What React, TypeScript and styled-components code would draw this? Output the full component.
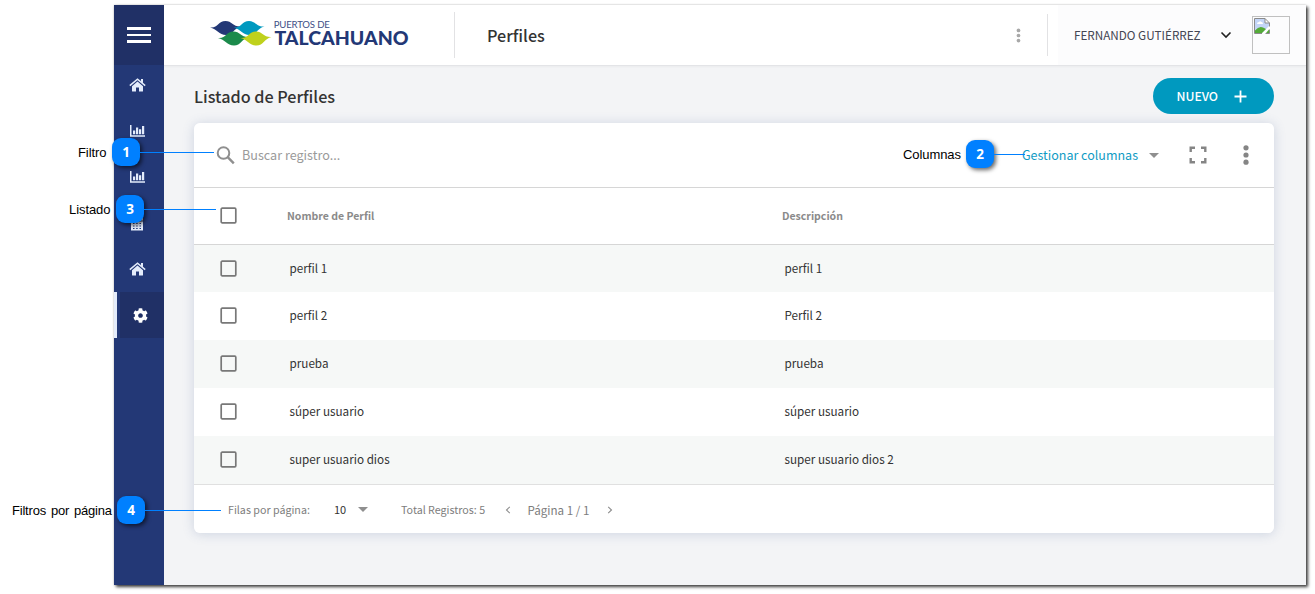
import React from "react";
import styled, { createGlobalStyle, css } from "styled-components";

const GlobalStyle = createGlobalStyle`
  * { box-sizing: border-box; }
  html, body { margin: 0; padding: 0; background: #fff; overflow: hidden; }
  body { font-family: "Noto Sans CJK JP", "Noto Sans", sans-serif; }
`;

const Stage = styled.div`
  position: relative;
  width: 1315px;
  height: 594px;
  padding: 5px 9px 9px 114px;
  background: #fff;
`;

const Shell = styled.div`
  display: flex;
  width: 1192px;
  height: 580px;
  background: #f3f4f6;
  box-shadow: 2px 2px 3px 0 rgba(0, 0, 0, 0.75), 0 0 2px rgba(0, 0, 0, 0.2);
`;

const Sidebar = styled.aside`
  flex: none;
  width: 50px;
  background: #233876;
`;

const MenuButton = styled.div`
  display: flex;
  flex-direction: column;
  align-items: center;
  justify-content: center;
  gap: 4px;
  height: 60px;
  background: #203066;
`;

const MenuBar = styled.span`
  width: 24px;
  height: 2.6px;
  background: #fff;
`;

const Nav = styled.nav`
  margin-top: -3px;
`;

const NavItem = styled.div<{ $active?: boolean }>`
  display: flex;
  align-items: center;
  justify-content: center;
  height: 46px;
  padding-right: 4px;
  color: #e4ecfb;
  ${(p) =>
    p.$active &&
    css`
      padding: 0 0 0 2px;
      color: #fff;
      background: linear-gradient(to right, #e4ecfb 3px, #233876 3px, #233876 6px, #203066 6px);
    `}
`;

const Main = styled.main`
  flex: 1;
  display: flex;
  flex-direction: column;
  min-width: 0;
`;

const Header = styled.header`
  display: flex;
  align-items: center;
  height: 61px;
  background: #fff;
  border-bottom: 1px solid #e3e4e7;
  box-shadow: 0 1px 2px rgba(0, 0, 0, 0.04);
`;

const LogoBox = styled.div`
  display: flex;
  align-items: center;
  width: 291px;
  height: 46px;
  padding-left: 45px;
  border-right: 1px solid #e2e2e4;
`;

const HeaderTitle = styled.h1`
  flex: 1;
  margin: 0;
  padding-left: 32px;
  font-size: 16.2px;
  line-height: 24px;
  font-weight: 500;
  color: #333;
`;

const HeaderMore = styled.div`
  display: flex;
  align-items: center;
  justify-content: flex-end;
  width: 50px;
  height: 42px;
  padding-right: 20px;
  border-right: 1px solid #e2e2e4;
`;

const UserBox = styled.div`
  display: flex;
  align-items: center;
  align-self: stretch;
  width: 248px;
  margin-left: 10px;
  padding: 0 16px;
  background: #fcfcfd;
`;

const UserName = styled.span`
  flex: none;
  width: 146px;
  font-size: 11.7px;
  line-height: 20px;
  color: #444653;
  white-space: nowrap;
`;

const Avatar = styled.div`
  width: 38px;
  height: 38px;
  margin-left: auto;
  padding: 1px;
  border: 1px solid #c0c0c0;
  line-height: 0;
`;

const Content = styled.section`
  flex: 1;
  padding: 12px 32px 0 30px;
`;

const TitleRow = styled.div`
  display: flex;
  align-items: center;
  justify-content: space-between;
  height: 36px;
  margin-bottom: 9px;
`;

const PageTitle = styled.h2`
  margin: 0;
  font-size: 16.2px;
  line-height: 24px;
  font-weight: 500;
  color: #333;
`;

const NewButton = styled.button`
  display: flex;
  align-items: center;
  justify-content: space-between;
  width: 121px;
  height: 36px;
  padding: 0 27px 0 23.5px;
  border: 0;
  border-radius: 18px;
  background: #0099bf;
  color: #fff;
  font: 500 12.2px/20px "Noto Sans CJK JP", sans-serif;
`;

const Card = styled.div`
  width: 1080px;
  height: 410px;
  border-radius: 6px;
  background: #fff;
  overflow: hidden;
  color: #333;
`;

const CardShadow = styled.div`
  border-radius: 6px;
  box-shadow: 0 1px 12px rgba(70, 95, 150, 0.22);
`;

const Toolbar = styled.div`
  display: flex;
  align-items: center;
  height: 65px;
  padding: 0 16px 0 22px;
  border-bottom: 1px solid #d6d6d6;
`;

const SearchHint = styled.span`
  flex: 1;
  padding-left: 7px;
  font-size: 12.6px;
  line-height: 20px;
  color: #9a9a9a;
`;

const ColumnsLink = styled.span`
  margin-right: 11px;
  font-size: 12.5px;
  line-height: 20px;
  color: #0f9bc4;
`;

const ToolIcon = styled.span<{ $left: number }>`
  display: flex;
  margin-left: ${(p) => p.$left}px;
`;

const Row = styled.div<{ $head?: boolean; $odd?: boolean; $height: number }>`
  display: grid;
  grid-template-columns: 93px 495px 1fr;
  align-items: center;
  height: ${(p) => p.$height}px;
  padding-bottom: 1px;
  background: ${(p) => (p.$odd ? "#f6f8f7" : "#fff")};
  border-bottom: ${(p) => (p.$head ? "1px solid #d6d6d6" : "0")};
`;

const Cell = styled.span<{ $head?: boolean }>`
  padding-left: ${(p) => (p.$head ? 0 : 2.5)}px;
  padding-bottom: ${(p) => (p.$head ? 0 : 1)}px;
  font-size: ${(p) => (p.$head ? 10.5 : 11.7)}px;
  line-height: 18px;
  font-weight: ${(p) => (p.$head ? 700 : 400)};
  color: ${(p) => (p.$head ? "#8a8a8a" : "#333")};
  white-space: nowrap;
`;

const Footer = styled.footer`
  display: flex;
  align-items: center;
  height: 49px;
  padding-left: 34px;
  border-top: 1px solid #e0e0e0;
  line-height: 18px;
  color: #7d7d7d;
  white-space: nowrap;
`;

const FooterItem = styled.span<{ $width: number; $dark?: boolean; $large?: boolean }>`
  display: flex;
  flex: none;
  align-items: center;
  width: ${(p) => p.$width}px;
  padding-top: ${(p) => (p.$dark ? 0 : 1)}px;
  padding-bottom: ${(p) => (p.$dark ? 1 : 0)}px;
  font-size: ${(p) => (p.$large ? 11.6 : p.$dark ? 11 : 10.7)}px;
  color: ${(p) => (p.$dark ? "#333" : "inherit")};
`;

const Callout = styled.div<{ $x: number; $y: number }>`
  position: absolute;
  left: ${(p) => p.$x}px;
  top: ${(p) => p.$y}px;
  display: flex;
  align-items: center;
  height: 28px;
`;

const CalloutLabel = styled.span<{ $width: number; $gap?: number }>`
  width: ${(p) => p.$width}px;
  padding-top: 1px;
  font: 13px/16px "Liberation Sans", Arial, sans-serif;
  letter-spacing: ${(p) => (p.$gap ? -0.2 : -0.08)}px;
  word-spacing: ${(p) => p.$gap ?? 0}px;
  color: #000;
  white-space: nowrap;
`;

const CalloutBadge = styled.span`
  width: 28px;
  height: 28px;
  border-radius: 9px;
  background: #0080ff;
  box-shadow: 2px 2px 4px rgba(0, 0, 0, 0.6);
  color: #fff;
  font: 700 13.5px/28px "Open Sans", sans-serif;
  text-align: center;
`;

const CalloutLine = styled.span<{ $width: number }>`
  width: ${(p) => p.$width}px;
  height: 1px;
  background: #0080ff;
`;

const WAVE = "M0 6.5C8 7.5 8 0 15.5 0C22 0 23 6 31 5.5C24 7 23 14 16 14C9 14 7 8 0 6.5Z";

const Logo = () => (
  <svg width="200" height="32" viewBox="0 0 200 32">
    <path d={WAVE} transform="translate(1 2)" fill="#233876" />
    <path d={WAVE} transform="translate(24.5 2)" fill="#0099bf" />
    <path d={WAVE} transform="translate(9 12.5)" fill="#1b8a4b" />
    <path d={WAVE} transform="translate(31.5 12.5)" fill="#bfd11c" />
    <text x="64.8" y="9" fontFamily="Lato, sans-serif" fontSize="9.6" fontWeight="400" fill="#3d4f86" textLength="56">PUERTOS DE</text>
    <text x="65.5" y="26" fontFamily="Lato, sans-serif" fontSize="19.2" fontWeight="900" fill="#233876" textLength="134" lengthAdjust="spacingAndGlyphs">TALCAHUANO</text>
  </svg>
);

const HomeIcon = () => (
  <svg width="17" height="14" viewBox="0 0 17 14" fill="currentColor">
    <path d="M8.5 3.6L14 8.2V13Q14 13.5 13.5 13.5H10V9.5H7V13.5H3.5Q3 13.5 3 13V8.2Z" />
    <path d="M.8 7.6L8.5 1.2L16.2 7.6" fill="none" stroke="currentColor" strokeWidth="1.5" />
    <path d="M12 1H14V5.4L12 3.8Z" />
  </svg>
);

const ChartIcon = () => (
  <svg width="15" height="12" viewBox="0 0 15 12" fill="currentColor">
    <path d="M0 0H1.5V10.2H15V11.7H0Z" />
    <path d="M3 5.5H5.2V9.2H3ZM6 2.5H8.2V9.2H6ZM9 4.2H11.2V9.2H9ZM12 1H14.2V9.2H12Z" />
  </svg>
);

const CalendarIcon = () => (
  <svg width="14" height="15" viewBox="0 0 14 15">
    <path d="M1 2H13V14.5H1Z" fill="currentColor" />
    <path d="M1 5H13M3 7.5H4.5M6.2 7.5H7.7M9.5 7.5H11M3 10H4.5M6.2 10H7.7M9.5 10H11M3 12.5H4.5M6.2 12.5H7.7M9.5 12.5H11" stroke="#233876" strokeWidth="1" />
  </svg>
);

const GearIcon = () => (
  <svg width="15" height="15" viewBox="0 0 512 512" fill="currentColor">
    <path d="M487.400 315.700l-42.600-24.600c4.300-23.200 4.300-47 0-70.200l42.600-24.600c4.900-2.800 7.100-8.600 5.500-14-11.100-35.600-30-67.800-54.700-94.600-3.800-4.100-10-5.100-14.800-2.300L380.800 110c-17.900-15.400-38.500-27.300-60.800-35.100V25.800c0-5.600-3.900-10.500-9.400-11.700-36.700-8.200-74.300-7.800-109.200 0-5.500 1.200-9.400 6.100-9.400 11.700V75c-22.200 7.900-42.800 19.800-60.800 35.100L88.700 85.500c-4.900-2.800-11-1.900-14.800 2.300-24.700 26.700-43.600 58.900-54.700 94.600-1.700 5.400.6 11.200 5.500 14L67.300 221c-4.300 23.200-4.300 47 0 70.200l-42.600 24.600c-4.900 2.800-7.100 8.600-5.500 14 11.100 35.600 30 67.800 54.700 94.600 3.800 4.100 10 5.100 14.800 2.300l42.600-24.600c17.900 15.400 38.500 27.300 60.800 35.100v49.200c0 5.600 3.900 10.500 9.400 11.700 36.700 8.200 74.300 7.800 109.200 0 5.500-1.200 9.400-6.100 9.400-11.700v-49.200c22.200-7.900 42.800-19.800 60.800-35.100l42.600 24.600c4.900 2.800 11 1.900 14.800-2.300 24.700-26.700 43.600-58.900 54.700-94.600 1.500-5.500-.7-11.300-5.600-14.100zM256 336c-44.100 0-80-35.900-80-80s35.900-80 80-80 80 35.900 80 80-35.900 80-80 80z" />
  </svg>
);

const CheckboxSvg = styled.svg`
  display: block;
  margin-left: 26px;
`;

const Checkbox = () => (
  <CheckboxSvg width="17" height="17" viewBox="0 0 17 17" fill="none" stroke="#787878" strokeWidth="1.7">
    <rect x="1.2" y="1.2" width="14.6" height="14.6" rx="1" />
  </CheckboxSvg>
);

const Dots = ({ size, color }: { size: number; color: string }) => (
  <svg width={size} height={size} viewBox="0 0 24 24" fill={color}>
    <circle cx="12" cy="4.8" r="2.6" />
    <circle cx="12" cy="12" r="2.6" />
    <circle cx="12" cy="19.2" r="2.6" />
  </svg>
);

const Caret = () => (
  <svg width="10" height="5" viewBox="0 0 10 5">
    <path d="M0 0H10L5 5Z" fill="#8f8f8f" />
  </svg>
);

const Chevron = ({ d }: { d: string }) => (
  <svg width="6" height="8" viewBox="0 0 6 8" fill="none" stroke="#8d8d8d" strokeWidth="1.1">
    <path d={d} />
  </svg>
);

const BrokenImage = () => (
  <svg width="16" height="16" viewBox="0 0 16 16">
    <path d="M.5.5H11L15.5 5V15.5H.5Z" fill="#fff" />
    <path d="M1 1H11V5H15V8L8 15H1Z" fill="#c3d5f7" />
    <path d="M3 6Q3 4 5 4Q6 2.5 7.5 4Q9 4 9 6Z" fill="#fff" />
    <path d="M1 15V12.5Q5 7.5 9 9.5L12 11L8 15Z" fill="#54ab38" />
    <path d="M8.5 16L16 8.5V11L11 16Z" fill="#fff" />
    <path d="M12 15L15 11.5V15Z" fill="#54ab38" />
    <path d="M8 15.5H.5V.5H11L15.5 5V8.5M11 .5V5H15.5M15.5 11.5V15.5H11.5" fill="none" stroke="#8b8b8b" />
  </svg>
);

const rows = [
  ["perfil 1", "perfil 1"],
  ["perfil 2", "Perfil 2"],
  ["prueba", "prueba"],
  ["súper usuario", "súper usuario"],
  ["super usuario dios", "super usuario dios 2"],
];

const callouts = [
  { n: 1, label: "Filtro", x: 78, y: 138, labelWidth: 34, line: 74 },
  { n: 2, label: "Columnas", x: 903, y: 140, labelWidth: 63, line: 31 },
  { n: 3, label: "Listado", x: 69, y: 195, labelWidth: 47, line: 72 },
  { n: 4, label: "Filtros por página", x: 12, y: 496, labelWidth: 105, line: 76, gap: 1.5 },
];

export default function App() {
  return (
    <Stage>
      <GlobalStyle />
      <Shell>
        <Sidebar>
          <MenuButton>
            <MenuBar />
            <MenuBar />
            <MenuBar />
          </MenuButton>
          <Nav>
            <NavItem><HomeIcon /></NavItem>
            <NavItem><ChartIcon /></NavItem>
            <NavItem><ChartIcon /></NavItem>
            <NavItem><CalendarIcon /></NavItem>
            <NavItem><HomeIcon /></NavItem>
            <NavItem $active><GearIcon /></NavItem>
          </Nav>
        </Sidebar>
        <Main>
          <Header>
            <LogoBox><Logo /></LogoBox>
            <HeaderTitle>Perfiles</HeaderTitle>
            <HeaderMore><Dots size={17} color="#a8a8a8" /></HeaderMore>
            <UserBox>
              <UserName>FERNANDO GUTIÉRREZ</UserName>
              <svg width="12" height="8" viewBox="0 0 12 8" fill="none" stroke="#222" strokeWidth="1.6">
                <path d="M1.5 1.5L6 6L10.5 1.5" />
              </svg>
              <Avatar><BrokenImage /></Avatar>
            </UserBox>
          </Header>
          <Content>
            <TitleRow>
              <PageTitle>Listado de Perfiles</PageTitle>
              <NewButton>
                NUEVO
                <svg width="13" height="13" viewBox="0 0 13 13" stroke="#fff" strokeWidth="1.8">
                  <path d="M6.5 .5V12.5M.5 6.5H12.5" />
                </svg>
              </NewButton>
            </TitleRow>
            <CardShadow>
              <Card>
                <Toolbar>
                  <svg width="19" height="19" viewBox="0 0 19 19" fill="none" stroke="#8f8f8f" strokeWidth="2">
                    <circle cx="7.5" cy="7" r="5.8" />
                    <path d="M11.7 11.2L17.8 17.3" strokeWidth="2.4" />
                  </svg>
                  <SearchHint>Buscar registro...</SearchHint>
                  <ColumnsLink>Gestionar columnas</ColumnsLink>
                  <Caret />
                  <ToolIcon $left={30}>
                    <svg width="18" height="18" viewBox="0 0 18 18" fill="none" stroke="#858585" strokeWidth="2.4">
                      <path d="M1.7 6V1.7H6M12 1.7H16.3V6M16.3 12V16.3H12M6 16.3H1.7V12" />
                    </svg>
                  </ToolIcon>
                  <ToolIcon $left={27}><Dots size={24} color="#858585" /></ToolIcon>
                </Toolbar>
                <Row $head $height={57}>
                  <Checkbox />
                  <Cell $head>Nombre de Perfil</Cell>
                  <Cell $head>Descripción</Cell>
                </Row>
                {rows.map(([name, description], i) => (
                  <Row key={name} $odd={i % 2 === 0} $height={i === 0 ? 47 : 48}>
                    <Checkbox />
                    <Cell>{name}</Cell>
                    <Cell>{description}</Cell>
                  </Row>
                ))}
                <Footer>
                  <FooterItem $width={106}>Filas por página:</FooterItem>
                  <FooterItem $width={23.5} $dark>10</FooterItem>
                  <FooterItem $width={43.5}><Caret /></FooterItem>
                  <FooterItem $width={103.5}>Total Registros: 5</FooterItem>
                  <FooterItem $width={23}><Chevron d="M4.8 .8L1.5 4L4.8 7.2" /></FooterItem>
                  <FooterItem $width={79.5} $large>Página 1 / 1</FooterItem>
                  <FooterItem $width={10}><Chevron d="M1.2 .8L4.5 4L1.2 7.2" /></FooterItem>
                </Footer>
              </Card>
            </CardShadow>
          </Content>
        </Main>
      </Shell>
      {callouts.map((c) => (
        <Callout key={c.n} $x={c.x} $y={c.y}>
          <CalloutLabel $width={c.labelWidth} $gap={c.gap}>{c.label}</CalloutLabel>
          <CalloutBadge>{c.n}</CalloutBadge>
          <CalloutLine $width={c.line} />
        </Callout>
      ))}
    </Stage>
  );
}
